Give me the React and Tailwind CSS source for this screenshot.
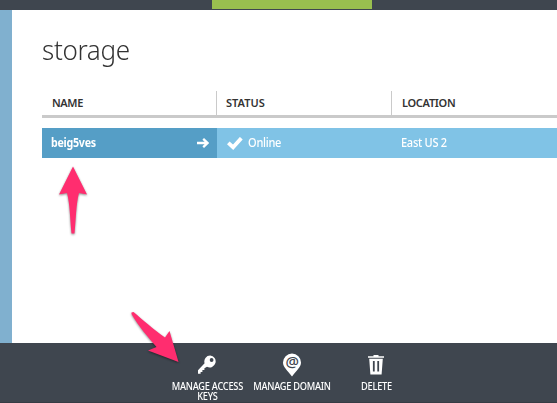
import React from "react";

function ArrowRight() {
  return (
    <svg width="12" height="10" viewBox="0 0 12 10" fill="none" stroke="#fff" strokeWidth="2.3">
      <path d="M0 5H11M6.2 .8L10.6 5L6.2 9.2" />
    </svg>
  );
}

function Check() {
  return (
    <svg width="16" height="13" viewBox="0 0 16 13" fill="none" stroke="#fff" strokeWidth="3.8">
      <path d="M1.3 5.800L6.100 10.200L14.300 1.200" />
    </svg>
  );
}

function KeyIcon() {
  return (
    <svg width="20" height="20" viewBox="0 0 20 20" fill="#fff">
      <path
        fillRule="evenodd"
        d="M13.2.6A5.9 5.9 0 0 0 7.6 8.3L1 15.2V18.7H3.6V17H5.4V15H7.4V13.2L10 11.7A5.9 5.9 0 1 0 13.2.6ZM14.6 3.1A1.9 1.9 0 1 1 14.6 6.9A1.9 1.9 0 1 1 14.6 3.1Z"
      />
    </svg>
  );
}

function DomainIcon() {
  return (
    <svg className="overflow-visible" width="20" height="24" viewBox="0 0 20 24">
      <path fill="#fff" d="M10 .5A9 9 0 0 0 1 9.500C1 14 5.200 17.300 10 23.500C14.800 17.300 19 14 19 9.500A9 9 0 0 0 10 .5Z" />
      <text x="10" y="14" textAnchor="middle" fontFamily="Noto Sans, sans-serif" fontSize="15" fontWeight="500" fill="#3f464f">
        @
      </text>
    </svg>
  );
}

function TrashIcon() {
  return (
    <svg width="16" height="20" viewBox="0 0 16 20">
      <path fill="#fff" fillRule="evenodd" d="M5.500 0H10.500V1.200H16V2.800H0V1.200H5.500ZM1.200 3.800H14.800L13.600 19.500H2.400ZM4.900 6V16.500H6.700V6ZM9.300 6V16.500H11.100V6Z" />
    </svg>
  );
}

function Command({ icon, children, className }) {
  return (
    <button className={"flex flex-col items-center gap-[4px] text-center text-[10.5px] font-medium leading-[9.5px] tracking-[-0.3px] text-white " + className}>
      <span className="flex h-[27px] items-center justify-center">{icon}</span>
      <span className="scale-x-[0.88] whitespace-nowrap">{children}</span>
    </button>
  );
}

export default function App() {
  return (
    <div className="relative flex h-[403px] w-[557px] flex-col overflow-hidden bg-white font-['Noto_Sans','Open_Sans',sans-serif] text-[#333]">
      <header className="h-[10px] shrink-0 bg-[#3f464f]">
        <div className="ml-[212px] h-[9px] w-[160px] bg-[#99bf4f]" />
      </header>

      <div className="flex h-[333px] shrink-0">
        <aside className="w-3 shrink-0 bg-[#80b0cf]" />
        <main className="min-w-0 grow pl-[30px]">
          <h1 className="origin-left scale-x-[0.93] pt-[20px] text-[28px] font-light leading-[38px] tracking-[-0.35px] text-[#333]">
            storage
          </h1>
          <div className="mt-[23px] grid h-[27px] grid-cols-[175px_175px_1fr] border-b-[3px] border-[#cacaca] text-[11px] font-semibold leading-[24px] text-[#333]">
            <div className="border-r border-[#cacaca] pl-[10px] tracking-[-0.4px]">NAME</div>
            <div className="border-r border-[#cacaca] pl-[9px] tracking-[0px]">STATUS</div>
            <div className="pl-[10px] tracking-[-0.3px]">LOCATION</div>
          </div>
          <div className="mt-[10px] grid h-[30px] grid-cols-[175px_175px_1fr] bg-[#80c3e6] text-[12px] leading-[30px] text-white">
            <div className="flex items-center justify-between bg-[#559ec6] pl-[9px] pr-[8px] text-[11.5px] font-bold">
              <span className="origin-left scale-x-[0.93] tracking-[-0.3px]">beig5ves</span>
              <ArrowRight />
            </div>
            <div className="flex items-center gap-[5px] pl-[10px] font-medium">
              <Check />
              <span className="origin-left scale-x-[0.92] tracking-[-0.3px]">Online</span>
            </div>
            <div className="pl-[9px] font-medium">
              <span className="inline-block origin-left scale-x-[0.92] tracking-[-0.3px]">East US 2</span>
            </div>
          </div>
        </main>
      </div>

      <footer className="flex h-[60px] shrink-0 items-start border-b border-[#363c44] bg-[#3f464f] pl-[166px] pt-[8px]">
        <Command icon={<KeyIcon />} className="w-[82px]">
          MANAGE ACCESS<br />KEYS
        </Command>
        <Command icon={<DomainIcon />} className="w-[87px]">
          MANAGE DOMAIN
        </Command>
        <Command icon={<TrashIcon />} className="w-[82px]">
          DELETE
        </Command>
      </footer>

      <svg className="absolute left-0 top-0 drop-shadow-[0_1px_1px_rgba(0,0,0,0.45)]" width="557" height="403" fill="#ff2d6f">
        <path d="M73 166.5L87 194.5L79 193C76 204 76 219 74.5 233.5H71.5C70 219 70 204 67 193L59 194.5Z" />
        <path d="M131.500 312.500L133.500 312C142 319 154 330 165 337.500L169.500 331L178.500 362L148 350.500L156.500 347C148 337 139 327 131.500 314Z" />
      </svg>
    </div>
  );
}
